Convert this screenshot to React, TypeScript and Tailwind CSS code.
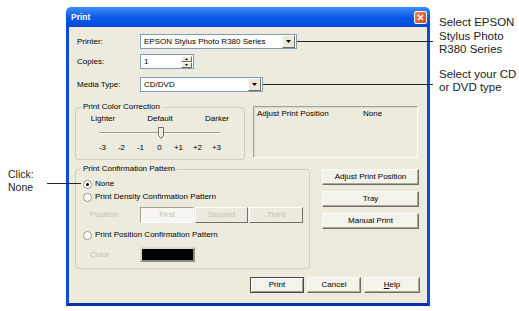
import React from 'react';

function DropButton() {
  return (
    <span className="flex h-[13px] w-[13px] items-center justify-center border border-t-white border-l-white border-b-[#716F64] border-r-[#716F64] bg-[#ECE9D8]">
      <svg width="5" height="3" viewBox="0 0 5 3">
        <path d="M0 0h5L2.5 3z" fill="#000" />
      </svg>
    </span>
  );
}

function Select({ value, width }: { value: string; width: string }) {
  return (
    <div
      className={`flex h-[15px] items-center justify-between border border-[#7F9DB9] bg-white pl-[3px] pr-px ${width}`}
    >
      <span>{value}</span>
      <DropButton />
    </div>
  );
}

function Spin({ value }: { value: string }) {
  return (
    <div className="flex h-[15px] w-[54px] items-center justify-between border border-[#7F9DB9] bg-white pl-[3px] pr-px">
      <span>{value}</span>
      <div className="flex flex-col">
        {[0, 1].map((i) => (
          <span
            key={i}
            className="flex h-[6px] w-[11px] items-center justify-center border border-t-white border-l-white border-b-[#716F64] border-r-[#716F64] bg-[#ECE9D8]"
          >
            <svg width="3" height="2" viewBox="0 0 3 2">
              <path d={i === 0 ? 'M0 2h3L1.5 0z' : 'M0 0h3L1.5 2z'} fill="#000" />
            </svg>
          </span>
        ))}
      </div>
    </div>
  );
}

function Radio({ checked = false }: { checked?: boolean }) {
  return (
    <span className="flex h-[9px] w-[9px] items-center justify-center rounded-full border border-[#9A9888] bg-white">
      {checked && <span className="h-[3px] w-[3px] rounded-full bg-black" />}
    </span>
  );
}

function Button({
  children,
  width = 'w-[97px]',
  primary = false,
}: {
  children: React.ReactNode;
  width?: string;
  primary?: boolean;
}) {
  return (
    <div
      className={`flex h-[16px] items-center justify-center bg-[#F3F2EB] ${width} ${
        primary
          ? 'border border-[#4A4A44] shadow-[inset_1px_1px_0_#fff,inset_-1px_-1px_0_#9C9A8C]'
          : 'border border-t-[#FAFAF6] border-l-[#FAFAF6] border-b-[#716F64] border-r-[#716F64] shadow-[inset_-1px_-1px_0_#ACA899]'
      }`}
    >
      {children}
    </div>
  );
}

export default function App() {
  return (
    <div className="relative flex h-[311px] w-[519px] overflow-hidden bg-white font-['Liberation_Sans',Arial,sans-serif] text-black">
      {/* left callout */}
      <div className="w-[66px] shrink-0 pl-[8px] pt-[168px] text-[10.5px] leading-[13px] text-[#222]">
        <div>Click:</div>
        <div>None</div>
      </div>

      {/* dialog */}
      <div className="mt-[7px] flex h-[299px] w-[364px] shrink-0 flex-col text-[8px] leading-[10px]">
        <div className="flex h-[20px] items-center justify-between rounded-t-[5px] bg-gradient-to-b from-[#3D8DF7] via-[#0A5BE8] to-[#0248D8] pl-[5px] pr-[3px]">
          <span className="text-[8.5px] font-bold text-white">Print</span>
          <span className="flex h-[13px] w-[13px] items-center justify-center rounded-[2px] border border-white bg-gradient-to-br from-[#F08A5E] to-[#D2401E]">
            <svg width="7" height="7" viewBox="0 0 7 7">
              <path d="M1 1l5 5M6 1L1 6" stroke="#fff" strokeWidth="1.6" />
            </svg>
          </span>
        </div>

        <div className="flex flex-1 flex-col border-x-[3px] border-b-[3px] border-x-[#0B4DD8] border-b-[#0630B0] bg-[#EDEBDE] pl-[6px] pr-[7px] pt-[7px]">
          <div className="flex h-[15px] items-center">
            <span className="w-[65px] pl-[2px]">Printer:</span>
            <Select value="EPSON Stylus Photo R380 Series" width="w-[157px]" />
          </div>
          <div className="mt-[5px] flex h-[15px] items-center">
            <span className="w-[65px] pl-[2px]">Copies:</span>
            <Spin value="1" />
          </div>
          <div className="mt-[8px] flex h-[15px] items-center">
            <span className="w-[65px] pl-[2px]">Media Type:</span>
            <Select value="CD/DVD" width="w-[123px]" />
          </div>

          <div className="mt-[10px] flex items-start">
            <fieldset className="h-[58px] w-[170px] rounded-[3px] border border-[#D0CEBF]">
              <legend className="ml-[5px] px-[2px] text-[#1E3E9E]">
                <span className="text-black">Print Color Correction</span>
              </legend>
              <div className="ml-[7px] mt-[2px] flex w-[154px] justify-between">
                <span className="w-[40px] text-center">Lighter</span>
                <span className="w-[40px] text-center">Default</span>
                <span className="w-[40px] text-center">Darker</span>
              </div>
              <div className="relative ml-[23px] mt-[2px] flex h-[14px] w-[121px] items-center">
                <div className="h-[2px] w-full border-t border-t-[#9D9B8E] border-b border-b-white" />
                <svg
                  className="absolute left-[59px] top-[1px]"
                  width="6"
                  height="12"
                  viewBox="0 0 6 12"
                >
                  <path d="M0.5 0.5h5v8l-2.5 3l-2.5-3z" fill="#EDEBDE" stroke="#6E6C60" strokeWidth="1" />
                  <path d="M1.5 1.5v7" stroke="#fff" strokeWidth="1" />
                </svg>
              </div>
              <div className="ml-[17px] mt-[3px] grid grid-cols-[repeat(7,19px)] text-center">
                {['-3', '-2', '-1', '0', '+1', '+2', '+3'].map((n) => (
                  <span key={n}>{n}</span>
                ))}
              </div>
            </fieldset>

            <div className="ml-[8px] mt-[4px] h-[52px] w-[165px] border border-t-[#A5A397] border-l-[#A5A397] border-b-white border-r-white pl-[3px] pt-[2px] shadow-[inset_1px_1px_0_#D9D7CA]">
              <div className="flex">
                <span className="w-[106px]">Adjust Print Position</span>
                <span>None</span>
              </div>
            </div>
          </div>

          <div className="mt-[4px] flex items-start">
            <fieldset className="h-[105px] w-[235px] rounded-[3px] border border-[#D0CEBF]">
              <legend className="ml-[5px] px-[2px]">Print Confirmation Pattern</legend>
              <div className="ml-[7px] mt-[5px] flex h-[10px] items-center gap-[3px]">
                <Radio checked />
                <span>None</span>
              </div>
              <div className="ml-[7px] mt-[3px] flex h-[10px] items-center gap-[3px]">
                <Radio />
                <span>Print Density Confirmation Pattern</span>
              </div>
              <div className="ml-[14px] mt-[5px] flex h-[16px] items-center">
                <span className="w-[50px] text-[#C2BFAE]">Position</span>
                <div className="flex text-[#C2BFAE]">
                  <span className="flex h-[16px] w-[54px] items-center justify-center border border-t-[#A5A397] border-l-[#A5A397] border-b-white border-r-white bg-[#F7F6F1]">
                    First
                  </span>
                  <span className="ml-px flex h-[16px] w-[53px] items-center justify-center border border-t-white border-l-white border-b-[#716F64] border-r-[#716F64] bg-[#ECEADF]">
                    Second
                  </span>
                  <span className="ml-px flex h-[16px] w-[54px] items-center justify-center border border-t-white border-l-white border-b-[#716F64] border-r-[#716F64] bg-[#ECEADF]">
                    Third
                  </span>
                </div>
              </div>
              <div className="ml-[7px] mt-[7px] flex h-[10px] items-center gap-[3px]">
                <Radio />
                <span>Print Position Confirmation Pattern</span>
              </div>
              <div className="ml-[14px] mt-[7px] flex h-[15px] items-center">
                <span className="w-[50px] text-[#C2BFAE]">Color</span>
                <span className="h-[15px] w-[55px] border-2 border-t-[#E0DED2] border-l-[#E0DED2] border-b-[#8D8B7E] border-r-[#8D8B7E] bg-black" />
              </div>
            </fieldset>

            <div className="ml-[12px] mt-[5px] flex flex-col gap-[6px]">
              <Button>Adjust Print Position</Button>
              <Button>Tray</Button>
              <Button>Manual Print</Button>
            </div>
          </div>

          <div className="mt-[8px] flex justify-end gap-[3px]">
            <Button width="w-[54px]" primary>
              Print
            </Button>
            <Button width="w-[54px]">Cancel</Button>
            <Button width="w-[56px]">
              <span>
                <span className="underline">H</span>elp
              </span>
            </Button>
          </div>
        </div>
      </div>

      {/* right callouts */}
      <div className="pl-[9px] pt-[16px] text-[11.5px] leading-[13.5px] text-[#222]">
        <div>Select EPSON</div>
        <div>Stylus Photo</div>
        <div>R380 Series</div>
        <div className="mt-[11px]">Select your CD</div>
        <div>or DVD type</div>
      </div>

      {/* leader lines */}
      <div className="absolute left-[297px] top-[41px] h-px w-[136px] bg-[#222]" />
      <div className="absolute left-[263px] top-[84px] h-px w-[170px] bg-[#222]" />
      <div className="absolute left-[47px] top-[183px] h-px w-[34px] bg-[#222]" />
    </div>
  );
}
